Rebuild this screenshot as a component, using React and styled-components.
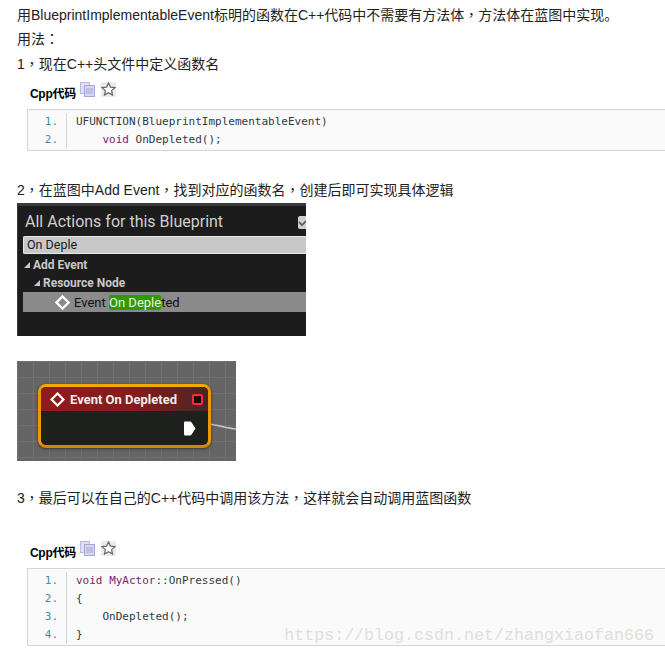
import React from 'react'
import styled, { createGlobalStyle } from 'styled-components'

const GlobalStyle = createGlobalStyle`
  html, body {
    margin: 0;
    padding: 0;
    background: #fff;
  }
  body {
    font-family: "Liberation Sans", "Noto Sans CJK SC", sans-serif;
    color: #222;
    overflow: hidden;
  }
`

const firstSnippet = [
  [{ text: 'UFUNCTION(BlueprintImplementableEvent)' }],
  [{ text: '    ' }, { text: 'void', kw: true }, { text: ' OnDepleted();' }],
]

const secondSnippet = [
  [{ text: 'void', kw: true }, { text: ' ' }, { text: 'MyActor', kw: true }, { text: '::OnPressed()' }],
  [{ text: '{' }],
  [{ text: '    OnDepleted();' }],
  [{ text: '}' }],
]

const CopyIcon = () => (
  <svg width="15" height="15" viewBox="0 0 15 15">
    <rect x="0.5" y="0.5" width="9" height="11" fill="#dfe0f4" stroke="#b9bbe4" />
    <rect x="4.5" y="3.5" width="10" height="11" fill="#d5d6ee" stroke="#a6a8d8" />
    <path d="M6 7h7M6 9h7M6 11h7" stroke="#a6a8d8" />
  </svg>
)

const StarIcon = () => (
  <StarBox>
    <svg width="15" height="14" viewBox="0 0 15 14">
      <path
        d="M7.5 1l1.9 4.1 4.6.5-3.4 3 .9 4.4-4-2.3-4 2.3.9-4.4-3.4-3 4.6-.5z"
        fill="#fff"
        stroke="#666"
        strokeWidth="1.2"
      />
    </svg>
  </StarBox>
)

const CodeBlock = ({ lines, title }) => (
  <>
    <CodeTitle>
      <strong>{title}</strong>
      <CopyIcon />
      <StarIcon />
    </CodeTitle>
    <CodeFrame>
      {lines.map((parts, i) => (
        <CodeRow key={i}>
          <LineNo>{i + 1}.</LineNo>
          <LineText>
            {parts.map((p, j) =>
              p.kw ? <Keyword key={j}>{p.text}</Keyword> : <span key={j}>{p.text}</span>
            )}
          </LineText>
        </CodeRow>
      ))}
    </CodeFrame>
  </>
)

const ActionMenu = () => (
  <Menu>
    <MenuTitle>
      All Actions for this Blueprint
      <MenuCheck>
        <svg width="8" height="13" viewBox="0 0 8 13">
          <path d="M1 6l3 3 4-4" fill="none" stroke="#555" strokeWidth="1.6" />
        </svg>
      </MenuCheck>
    </MenuTitle>
    <MenuSearch>On Deple</MenuSearch>
    <MenuGroup>
      <Caret />
      Add Event
    </MenuGroup>
    <MenuSubGroup>
      <Caret />
      Resource Node
    </MenuSubGroup>
    <MenuItem>
      <svg width="15" height="15" viewBox="0 0 15 15">
        <path d="M7.5 1.5l6 6-6 6-6-6z" fill="none" stroke="#fff" strokeWidth="2.4" />
      </svg>
      <span>
        Event <Match>On Deple</Match>ted
      </span>
    </MenuItem>
  </Menu>
)

const GraphNode = () => (
  <Graph>
    <Wire width="28" height="10" viewBox="0 0 28 10">
      <path d="M0 1C10 2 18 5 28 6" fill="none" stroke="#c8c8c8" strokeWidth="1.5" />
    </Wire>
    <NodeCard>
      <NodeHeader>
        <svg width="15" height="15" viewBox="0 0 15 15">
          <path d="M7.5 1.5l6 6-6 6-6-6z" fill="none" stroke="#fff" strokeWidth="2.2" />
        </svg>
        <NodeTitle>Event On Depleted</NodeTitle>
        <NodePin />
      </NodeHeader>
      <NodeBody>
        <svg width="13" height="15" viewBox="0 0 13 15">
          <path d="M1 1.5Q1 .5 2 .5h5q1 0 1.6 1L12.5 7.5 8.6 13.5q-.6 1-1.6 1H2q-1 0-1-1z" fill="#fff" />
        </svg>
      </NodeBody>
    </NodeCard>
  </Graph>
)

const App = () => (
  <Page>
    <GlobalStyle />
    <Para $h={24} $top={3}>
      用BlueprintImplementableEvent标明的函数在C++代码中不需要有方法体<Punct>，</Punct>方法体在蓝图中实现。
    </Para>
    <Para $h={24}>用法<Punct>：</Punct></Para>
    <Para $h={26}>1<Punct>，</Punct>现在C++头文件中定义函数名</Para>
    <CodeBlock title="Cpp代码" lines={firstSnippet} />
    <Para $h={24} $top={27}>2<Punct>，</Punct>在蓝图中Add Event<Punct>，</Punct>找到对应的函数名<Punct>，</Punct>创建后即可实现具体逻辑</Para>
    <ActionMenu />
    <GraphNode />
    <Para $h={24} $top={25}>3<Punct>，</Punct>最后可以在自己的C++代码中调用该方法<Punct>，</Punct>这样就会自动调用蓝图函数</Para>
    <Spacer />
    <CodeBlock title="Cpp代码" lines={secondSnippet} />
    <Watermark>https://blog.csdn.net/zhangxiaofan666</Watermark>
  </Page>
)

const Page = styled.div`
  position: relative;
  width: 665px;
  height: 656px;
  padding-left: 17px;
  box-sizing: border-box;
  overflow: hidden;
`

const Para = styled.p`
  margin: ${({ $top }) => $top || 0}px 0 0;
  height: ${({ $h }) => $h}px;
  line-height: ${({ $h }) => $h}px;
  font-size: 14px;
  white-space: nowrap;
`

const Punct = styled.span`
  font-family: "Noto Sans CJK TC", sans-serif;
  line-height: 0;
`

const Spacer = styled.div`
  height: 26px;
`

const CodeTitle = styled.div`
  display: flex;
  align-items: flex-start;
  height: 32px;
  padding: 5px 0 0 13px;
  box-sizing: border-box;
  font-size: 12px;
  line-height: 17px;
  color: #000;

  strong {
    width: 44px;
    margin: 4px 6px 0 0;
    font-weight: 700;
    letter-spacing: -0.3px;
    white-space: nowrap;
  }

  svg {
    display: block;
  }
`

const StarBox = styled.span`
  display: block;
  width: 15px;
  height: 15px;
  margin-left: 6px;
  background: #ebebeb;
`

const CodeFrame = styled.div`
  margin-left: 10px;
  width: 640px;
  box-sizing: border-box;
  border: 1px solid #d4d7da;
  border-right: none;
  background: #fafafa;
  padding: 3px 0 1px;
`

const CodeRow = styled.div`
  display: flex;
  height: 18px;
  line-height: 18px;
  font-family: "DejaVu Sans Mono", "Liberation Mono", monospace;
  font-size: 11px;
  color: #2d3a44;
`

const LineNo = styled.span`
  flex: none;
  width: 39px;
  padding-right: 8px;
  box-sizing: border-box;
  text-align: right;
  color: #3f8fae;
  border-right: 1px solid #d4d7da;
`

const LineText = styled.span`
  padding-left: 9px;
  white-space: pre;
`

const Keyword = styled.span`
  color: #7a1f6b;
`

const Menu = styled.div`
  width: 289px;
  height: 133px;
  margin-top: 1px;
  box-sizing: border-box;
  background: #1c1c1c;
  border-top: 3px solid #3a3a3a;
  border-left: 1px solid #3a3a3a;
  overflow: hidden;
  padding-left: 5px;
  color: #d8d8d8;
  font-family: "Roboto", "Liberation Sans", sans-serif;
`

const MenuTitle = styled.div`
  display: flex;
  align-items: center;
  justify-content: space-between;
  height: 30px;
  font-size: 16px;
  color: #cfcfcf;
  padding-left: 2px;
  white-space: nowrap;
`

const MenuCheck = styled.span`
  display: block;
  width: 8px;
  height: 13px;
  margin-top: 3px;
  border-radius: 2px 0 0 2px;
  background: #cfcfcf;

  svg {
    display: block;
  }
`

const MenuSearch = styled.div`
  height: 18px;
  line-height: 16px;
  margin-right: -2px;
  box-sizing: border-box;
  padding-left: 3px;
  background: #c8c8c8;
  border: 1px solid #e8e8e8;
  border-right: none;
  border-radius: 2px 0 0 2px;
  color: #1a1a1a;
  font-size: 12.5px;
`

const MenuGroup = styled.div`
  display: flex;
  align-items: center;
  gap: 3px;
  height: 18px;
  margin-top: 2px;
  padding-left: 1px;
  font-size: 12px;
  font-weight: 700;
  color: #c8c8c8;
`

const MenuSubGroup = styled(MenuGroup)`
  margin-top: 0;
  padding-left: 11px;
`

const Caret = styled.i`
  width: 0;
  height: 0;
  border-bottom: 6px solid #c8c8c8;
  border-left: 6px solid transparent;
`

const MenuItem = styled.div`
  display: flex;
  align-items: center;
  gap: 4px;
  height: 20px;
  padding-left: 32px;
  background: #8a8a8a;
  color: #111;
  font-size: 13px;
  white-space: nowrap;
`

const Match = styled.span`
  display: inline-block;
  line-height: 15px;
  background: #2f9a06;
  color: #eaf5e0;
  border-radius: 2px;
`

const Graph = styled.div`
  position: relative;
  display: flex;
  width: 219px;
  height: 100px;
  margin-top: 25px;
  padding: 23px 0 0 21px;
  box-sizing: border-box;
  background-color: #656565;
  background-image:
    linear-gradient(#707070 1px, transparent 1px),
    linear-gradient(90deg, #707070 1px, transparent 1px);
  background-size: 16px 16px;
`

const Wire = styled.svg`
  position: absolute;
  right: 0;
  top: 62px;
`

const NodeCard = styled.div`
  position: relative;
  width: 173px;
  height: 64px;
  box-sizing: border-box;
  border: 3px solid #e79a00;
  border-color: #f0aa00 #e89b00 #d98500;
  border-radius: 8px;
  background: #1e201e;
  overflow: hidden;
  box-shadow: 0 1px 3px rgba(0, 0, 0, 0.5);
`

const NodeHeader = styled.div`
  display: flex;
  align-items: center;
  height: 24px;
  padding: 0 5px 0 9px;
  background: linear-gradient(90deg, #8f1c1c 0%, #861b1b 55%, #4a2525 100%);
  color: #f0ecec;
`

const NodeTitle = styled.span`
  flex: 1;
  margin-left: 5px;
  font-family: "Roboto", "Liberation Sans", sans-serif;
  font-size: 13px;
  font-weight: 700;
  white-space: nowrap;
`

const NodePin = styled.span`
  width: 11px;
  height: 11px;
  box-sizing: border-box;
  border: 2px solid #ff2b3a;
  border-radius: 2px;
  background: #1a0a0a;
`

const NodeBody = styled.div`
  display: flex;
  justify-content: flex-end;
  padding: 10px 12px 0 0;

  svg {
    display: block;
  }
`

const Watermark = styled.div`
  position: absolute;
  right: 11px;
  top: 625px;
  font-family: "Liberation Mono", monospace;
  font-size: 16.67px;
  line-height: 22px;
  color: #e0e0da;
  white-space: nowrap;
`

export default App
